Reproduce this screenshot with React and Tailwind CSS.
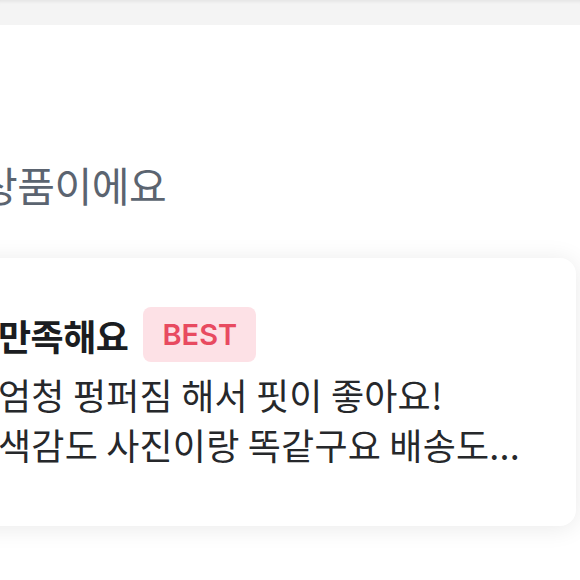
const review = {
  title: '만족해요',
  lines: ['엄청 펑퍼짐 해서 핏이 좋아요!', '색감도 사진이랑 똑같구요 배송도...'],
};

const App = () => {
  return (
    <div
      className="w-[580px] h-[580px] overflow-hidden bg-white relative"
      style={{ fontFamily: '"Noto Sans CJK KR", "Noto Sans", sans-serif' }}
    >
      <div className="h-[25px] bg-[#f4f4f4] shadow-[inset_0_4px_3px_-2px_rgba(0,0,0,0.06)]" />

      <div className="h-[233px] flex flex-col justify-end pb-[49px]">
        <p className="-ml-[20px] text-[41px] leading-[50px] text-[#5b6470] tracking-[-0.5px] whitespace-nowrap">
          상품이에요
        </p>
      </div>

      <div className="-ml-[40px] mr-[4px] h-[268px] bg-white rounded-[16px] shadow-[0_2px_24px_rgba(0,0,0,0.09)] pt-[49px] pl-[38px]">
        <div className="flex items-center gap-[15px]">
          <h3 className="text-[36px] leading-[44px] font-bold text-[#1b1d21] tracking-[-0.5px] whitespace-nowrap">
            {review.title}
          </h3>
          <span
            className="h-[55px] px-[19px] flex items-center rounded-[8px] bg-[#fde1e6] text-[#e84a60] text-[29px] font-semibold"
            style={{ fontFamily: 'Inter, "Liberation Sans", sans-serif' }}
          >
            BEST
          </span>
        </div>
        <div className="mt-[7px] text-[36px] leading-[50px] text-[#26282b] whitespace-nowrap tracking-[0.2px]">
          {review.lines.map((line) => (
            <p key={line}>{line}</p>
          ))}
        </div>
      </div>
    </div>
  );
};

export default App;
